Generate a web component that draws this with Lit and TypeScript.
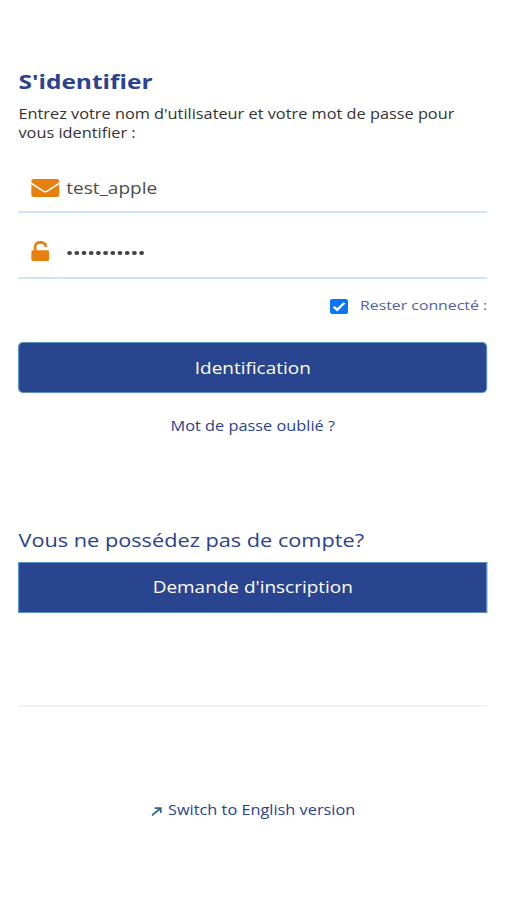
import { LitElement, html, css } from "lit";
import { customElement } from "lit/decorators.js";

@customElement("app-root")
class AppRoot extends LitElement {
  static styles = css`
    :host { display: block; width: 507px; height: 900px; overflow: hidden; background: #fff; }
    * { box-sizing: border-box; margin: 0; }
    /* Type and controls use a wide 6:5 horizontal proportion. */
    .page { width: 422.5px; height: 900px; padding: 66px 16.6px 0 15.4px; display: flex; flex-direction: column; transform: scaleX(1.2); transform-origin: 0 0; font-family: "Open Sans", "Noto Sans", sans-serif; color: #333; }
    h1 { font-size: 20.4px; line-height: 30px; font-weight: 700; color: #2a428f; white-space: nowrap; }
    .intro { margin-top: 7.5px; font-size: 13.6px; line-height: 19px; white-space: nowrap; }
    .field { display: flex; align-items: center; border-bottom: 2px solid #d0e4f8; padding-left: 10.8px; color: #4c4c4c; font-size: 15.85px; }
    .user { margin-top: 21.5px; height: 50px; padding-top: 2px; }
    .pass { height: 66px; padding-top: 11px; }
    .icon { width: 29px; flex: none; display: flex; }
    .icon svg { display: block; }
    .user span { line-height: 24px; }
    .dots { display: flex; gap: 2.05px; padding: 5px 0 0 0.7px; }
    .dots i { width: 4px; height: 4.6px; border-radius: 50%; background: #444; }
    .remember { display: flex; justify-content: flex-end; align-items: center; margin-top: 15px; height: 22px; font-size: 13.2px; color: #5260a2; }
    .check { margin: 3px 10.5px 0 0; width: 15px; height: 15px; display: block; }
    .button { display: flex; align-items: center; justify-content: center; height: 51px; width: 100%; flex: none; border: 1px solid #5d91c5; background: #2a4590; color: #fff; font: inherit; font-size: 15.8px; padding: 0; }
    .login { margin-top: 26px; border-radius: 4px / 5px; }
    .link { color: #2a428f; font-size: 13.6px; line-height: 20px; text-align: center; }
    .forgot { margin-top: 22.5px; }
    h2 { margin-top: 90.5px; color: #2a428f; font-size: 18.1px; line-height: 28px; font-weight: 400; white-space: nowrap; }
    .signup { margin-top: 8px; padding-bottom: 1px; }
    .rule { margin-top: 92px; height: 2px; background: #f0f3f6; }
    .lang { margin-top: 93px; display: flex; justify-content: center; align-items: center; gap: 5px; padding-left: 0.8px; }
    .lang svg { margin-top: 2px; }
  `;

  render() {
    return html`
      <main class="page">
        <h1>S'identifier</h1>
        <p class="intro">Entrez votre nom d'utilisateur et votre mot de passe pour<br />vous identifier :</p>
        <div class="field user">
          <div class="icon">
            <svg width="23.4" height="18" viewBox="0 0 28 18" preserveAspectRatio="none" fill="#e8800f">
              <path d="M2.6 0H25.4Q28 0 28 2V3.3L15.6 11.4Q14 12.4 12.4 11.4L0 3.3V2Q0 0 2.6 0Z" />
              <path d="M0 5.2L11.6 12.8Q14 14.2 16.4 12.8L28 5.2V16Q28 18 25.4 18H2.6Q0 18 0 16Z" />
            </svg>
          </div>
          <span>test_apple</span>
        </div>
        <div class="field pass">
          <div class="icon">
            <svg width="15.2" height="20" viewBox="0 0 18 20" preserveAspectRatio="none">
              <path d="M3.9 10V6Q3.9 1.4 9.2 1.4Q13.6 1.4 14.4 5" fill="none" stroke="#e8800f" stroke-width="2.6" stroke-linecap="round" />
              <rect y="9.2" width="18" height="10.8" rx="1.7" fill="#e8800f" />
            </svg>
          </div>
          <div class="dots">${Array.from({ length: 11 }, () => html`<i></i>`)}</div>
        </div>
        <label class="remember">
          <svg class="check" viewBox="0 0 15 15">
            <rect width="15" height="15" rx="2" fill="#0876fb" />
            <path d="M3 7.8L6 10.8L12 3.9" fill="none" stroke="#fff" stroke-width="2.2" />
          </svg>
          <span>Rester connecté :</span>
        </label>
        <button class="button login"><span>Identification</span></button>
        <a class="link forgot"><span>Mot de passe oublié ?</span></a>
        <h2>Vous ne possédez pas de compte?</h2>
        <button class="button signup"><span>Demande d'inscription</span></button>
        <div class="rule"></div>
        <a class="link lang">
          <svg width="9" height="9" viewBox="0 0 11 9" preserveAspectRatio="none" fill="none" stroke="#2f6685" stroke-width="1.7">
            <path d="M0.8 8.4L8.6 2" /><path d="M3.6 1.2H9.8V6" /><path d="M6 1.6H9.6V4.6Z" fill="#2f6685" stroke="none" />
          </svg>
          <span>Switch to English version</span>
        </a>
      </main>
    `;
  }
}
